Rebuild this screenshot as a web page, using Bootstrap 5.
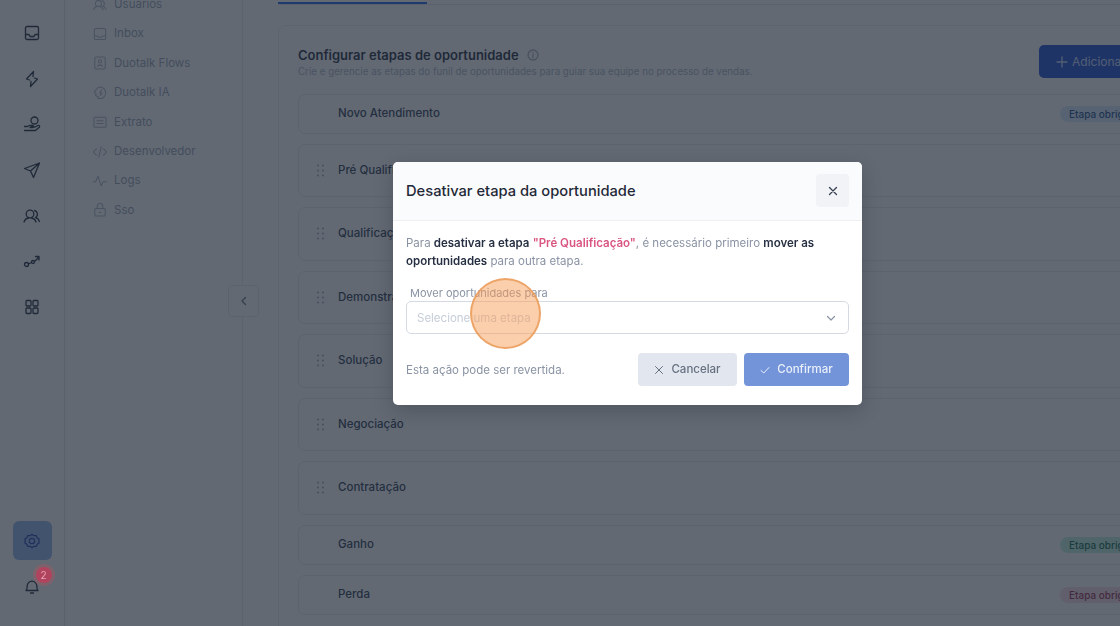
<!DOCTYPE html>
<html lang="pt-BR">
<head>
  <meta charset="UTF-8" />
  <meta name="viewport" content="width=device-width, initial-scale=1.0"/>
  <link href="https://cdn.jsdelivr.net/npm/bootstrap@5.3.3/dist/css/bootstrap.min.css" rel="stylesheet"/>
  <script src="https://cdn.jsdelivr.net/npm/bootstrap@5.3.3/dist/js/bootstrap.bundle.min.js"></script>
  <title>Configurar etapas de oportunidade</title>
  <style>
    html, body { height: 626px; overflow: hidden; }
    body { font-family: Inter, "Liberation Sans", sans-serif; background: #fff; color: #1f2937; }
    svg { fill: none; stroke: currentColor; stroke-width: 1.3; stroke-linecap: round; stroke-linejoin: round; display: block; flex-shrink: 0; }

    .app-shell { height: 626px; }
    .icon-rail { width: 65px; flex-shrink: 0; border-right: 1px solid #dfe3e8; padding: 11px 0 21px; color: #1e293b; }
    .rail-list { gap: 25.7px; margin-top: 12px; }
    .rail-btn { width: 39px; height: 39px; display: flex; align-items: center; justify-content: center; position: relative; border-radius: 6px; }
    .rail-gear { background: #93b5ee; color: #1e40af; margin-bottom: 6px; }
    .rail-dot { position: absolute; z-index: 1; left: 23px; top: 1px; width: 16px; height: 16px; border-radius: 50%; background: #b0445e; color: #e9a3b2; font-size: 10px; line-height: 16px; text-align: center; box-shadow: 0 0 0 3px #7f616c; }

    .side-menu { width: 178px; flex-shrink: 0; border-right: 1px solid #e9ebef; position: relative; padding: 0 0 0 27px; margin-top: -10px; height: 636px; }
    .side-item { display: flex; align-items: center; gap: 6px; height: 29.4px; font-size: 11.5px; color: #9aa2b3; }
    .side-item svg { color: #adb5c4; }
    .collapse-btn { position: absolute; left: 163px; top: 295px; width: 31px; height: 32px; border: 1px solid #e9ebef; border-radius: 4px; background: #fff; display: flex; align-items: center; justify-content: center; color: #6b7280; }

    .main-area { width: 960px; flex-shrink: 0; padding: 0 0 0 35px; }
    .tab-line { height: 5px; padding-top: 2px; border-bottom: 1px solid #e6e8ec; margin-bottom: 20px; }
    .tab-line div { width: 149px; height: 2px; background: #2563eb; }
    .stage-panel { border: 1px solid #eceef2; border-radius: 8px; padding: 19px 19px 12px; height: 640px; }
    .panel-head { height: 48.5px; }
    .panel-title { font-size: 13px; font-weight: 600; line-height: 20px; color: #1f2a3d; margin: 0; }
    .panel-sub { font-size: 9.75px; line-height: 13px; color: #aeb5c2; margin: 0; }
    .info-ico { color: #a9b0bc; margin-left: 8px; }
    .add-btn { background: #1d4ed8; color: #c9d8f8; font-size: 12px; border-radius: 5px; height: 33px; width: 144px; border: 0; padding: 0 0 0 16px; gap: 3px; }
    .add-btn:hover { background: #1d4ed8; color: #c9d8f8; }

    .stage-list { gap: 10px; }
    .stage-row { border: 1px solid #e8eaee; border-radius: 7px; padding: 0 0 0 18px; font-size: 11.5px; font-weight: 500; color: #2f3b52; }
    .row-fixed { height: 40px; padding-left: 39px; }
    .row-drag { height: 53.5px; }
    .row-drag svg { color: #a3a9b5; margin-right: 14px; }
    .stage-tag { margin-left: auto; font-size: 10px; font-weight: 500; height: 16px; line-height: 16px; padding: 0 9px; border-radius: 8px; width: 122px; white-space: nowrap; }
    .tag-blue { background: #dbeafe; color: #1e4e8c; }
    .tag-green { background: #c4f1de; color: #0f6b4f; }
    .tag-red { background: #fbdde5; color: #9b2c55; }

    .page-shade { position: fixed; inset: 0; background: rgba(32, 41, 56, .7); }

    .stage-dialog { position: absolute; left: 393px; top: 162px; width: 469px; height: 243px; background: #fff; border: 0; border-radius: 5px; overflow: hidden; box-shadow: 0 6px 20px rgba(0, 0, 0, .18); }
    .stage-dialog .modal-header { height: 59px; padding: 0 13px; background: #fafbfc; border-bottom: 1px solid #eef0f3; }
    .stage-dialog .modal-title { font-size: 14.7px; font-weight: 500; color: #1f2937; }
    .close-box { width: 33px; height: 33px; background: #f1f3f7; border: 0; border-radius: 4px; padding: 0; display: flex; align-items: center; justify-content: center; color: #374151; margin-top: -1px; }
    .stage-dialog .modal-body { padding: 14px 13px 0; flex: none; }
    .dialog-text { font-size: 11.5px; line-height: 17.5px; color: #8a93a3; margin: 0 0 16px; }
    .dialog-text strong { color: #273043; font-weight: 600; }
    .dialog-text .stage-name { color: #d9567f; }
    .move-label { font-size: 11px; line-height: 14px; color: #8a93a3; margin: 0 0 1px 4px; display: block; }
    .stage-select { height: 33px; font-size: 11.500px; color: #c6ced9; padding: 2px 30px 0 10px; border-color: #d5dae2; border-radius: 5px; background-image: url("data:image/svg+xml,%3csvg xmlns='http://www.w3.org/2000/svg' viewBox='0 0 12 12'%3e%3cpath fill='none' stroke='%238a93a3' stroke-width='1.2' stroke-linecap='round' stroke-linejoin='round' d='M2.500 4.500 6 8l3.500-3.500'/%3e%3c/svg%3e"); background-position: right 11px center; background-size: 12px 12px; }
    .dialog-foot { padding: 19px 13px 0; }
    .foot-note { font-size: 11.5px; color: #8a93a3; padding-top: 3px; }
    .btn-cancel, .btn-confirm { height: 33px; font-size: 11.5px; font-weight: 500; border: 0; border-radius: 4px; padding: 1px 0 0; justify-content: center; gap: 7px; }
    .btn-cancel { width: 99px; background: #e1e6ef; color: #66707f; margin-right: 7px; }
    .btn-cancel svg, .btn-confirm svg { stroke-width: 1; }
    .btn-confirm { width: 105px; background: #7394d8; color: #eaf0fb; }

    .click-mark { position: absolute; left: 470px; top: 278px; width: 71px; height: 71px; border-radius: 50%; background: rgba(247, 158, 90, .5); border: 2px solid rgba(232, 150, 80, .75); }
  </style>
</head>
<body>
  <div class="app-shell d-flex">
    <aside class="icon-rail d-flex flex-column align-items-center">
      <div class="rail-list d-flex flex-column align-items-center">
        <svg width="20" height="20" viewBox="0 0 20 20"><rect x="3.500" y="3.500" width="13" height="13" rx="1.500"/><path d="M3.500 11.500h3.500l1 2h4l1-2h3.500"/></svg>
        <svg width="20" height="20" viewBox="0 0 20 20"><path d="M11.500 2.500 4.500 10l3 1M8.500 17.500l7-7.500-3-1M11.500 2.500 11 7.500M8.500 17.500 9 12.500"/></svg>
        <svg width="20" height="20" viewBox="0 0 20 20"><circle cx="12.500" cy="6.500" r="3.500"/><path d="M2.500 16.500h11l4-3.500c.6-1-.4-2-1.500-1.500l-3 1.500H9.500M2.500 12.500h3l2-1h3c1.200 0 1.200 2 0 2H8"/></svg>
        <svg width="20" height="20" viewBox="0 0 20 20"><path d="M17.500 3 2.500 8.500 8.500 11l3 6.500zM8.500 11l9-8"/></svg>
        <svg width="20" height="20" viewBox="0 0 20 20"><circle cx="8" cy="8" r="3.800"/><path d="M2 16c.8-2.500 3-3.800 4.500-4M9.500 12c1.500.2 3.700 1.500 4.500 4M12.500 4.500a3.800 3.800 0 0 1 1 7c1.500.4 3.200 1.700 4 4"/></svg>
        <svg width="20" height="20" viewBox="0 0 20 20"><circle cx="4.500" cy="13.500" r="2"/><circle cx="11" cy="11" r="1.500"/><path d="M6.500 13 9.500 11.500M12.500 10.500l4-4M13.500 5.500h3.500V9"/></svg>
        <svg width="20" height="20" viewBox="0 0 20 20"><rect x="4" y="3.500" width="5" height="5.500" rx="1"/><rect x="11" y="3.500" width="5" height="5.500" rx="1"/><rect x="4" y="11" width="5" height="5.500" rx="1"/><rect x="11" y="11" width="5" height="5.500" rx="1"/></svg>
      </div>
      <div class="mt-auto d-flex flex-column align-items-center">
        <div class="rail-btn rail-gear">
          <svg width="18" height="18" viewBox="0 0 20 20"><circle cx="10" cy="10" r="3"/><path d="M10 2.500l2 1.600 2.700-.2 1 2.400 2.300 1.500-.6 2.200.6 2.200-2.300 1.500-1 2.400-2.700-.2-2 1.600-2-1.600-2.700.2-1-2.400-2.300-1.500.6-2.200-.6-2.200 2.300-1.500 1-2.400 2.700.2z"/></svg>
        </div>
        <div class="rail-btn">
          <svg width="20" height="20" viewBox="0 0 20 20"><path d="M4 14.500c1-1 1.200-2 1.200-4.500a4.800 4.800 0 0 1 9.600 0c0 2.500.2 3.500 1.200 4.500zM8.500 17h3"/></svg>
          <span class="rail-dot">2</span>
        </div>
      </div>
    </aside>

    <nav class="side-menu">
      <div class="side-item"><svg width="16" height="16" viewBox="0 0 20 20"><circle cx="8" cy="8" r="3.800"/><path d="M2 16c.8-2.500 3-3.800 4.500-4M9.500 12c1.500.2 3.700 1.500 4.500 4M12.500 4.500a3.800 3.800 0 0 1 1 7c1.500.4 3.200 1.700 4 4"/></svg>Usuários</div>
      <div class="side-item"><svg width="16" height="16" viewBox="0 0 20 20"><rect x="3" y="3" width="14" height="14" rx="1.500"/><path d="M3 12.500h4l1 1.500h4l1-1.500h4"/></svg>Inbox</div>
      <div class="side-item"><svg width="16" height="16" viewBox="0 0 20 20"><rect x="3.500" y="2.500" width="13" height="15" rx="1.500"/><circle cx="10" cy="8" r="2"/><path d="M7 14c.5-1.800 5.500-1.800 6 0"/></svg>Duotalk Flows</div>
      <div class="side-item"><svg width="16" height="16" viewBox="0 0 20 20"><path d="M10 2.500a7 7 0 0 1 7 7 7 7 0 0 1-7 7.500H7.500v-2.500l-3-1 .5-3-2-1L5 6a6 6 0 0 1 5-3.500z"/><path d="M12.500 6 9.500 10h3l-2 3"/></svg>Duotalk IA</div>
      <div class="side-item"><svg width="16" height="16" viewBox="0 0 20 20"><rect x="2.500" y="4" width="15" height="12.500" rx="1"/><path d="M6 8.500h8M6 12h8"/></svg>Extrato</div>
      <div class="side-item"><svg width="16" height="16" viewBox="0 0 20 20"><path d="M5.500 6 1.500 10l4 4M14.500 6l4 4-4 4M11.500 3.500l-3 13"/></svg>Desenvolvedor</div>
      <div class="side-item"><svg width="16" height="16" viewBox="0 0 20 20"><path d="M1.500 11h3l3-7 4 12 2.500-5h4.500"/></svg>Logs</div>
      <div class="side-item"><svg width="16" height="16" viewBox="0 0 20 20"><rect x="3.500" y="8" width="13" height="9.500" rx="1"/><path d="M6.500 8V5.500a3.500 3.500 0 0 1 7 0V8M9 13h2"/></svg>Sso</div>
      <div class="collapse-btn"><svg width="12" height="12" viewBox="0 0 12 12"><path d="M7.500 2.500 4 6l3.500 3.500"/></svg></div>
    </nav>

    <main class="main-area">
      <div class="tab-line"><div></div></div>
      <section class="stage-panel">
        <div class="panel-head d-flex justify-content-between align-items-start">
          <div>
            <div class="d-flex align-items-center">
              <h2 class="panel-title">Configurar etapas de oportunidade</h2>
              <svg class="info-ico" width="12" height="12" viewBox="0 0 12 12"><circle cx="6" cy="6" r="5"/><path d="M6 5.500v3M6 3.500v.2"/></svg>
            </div>
            <p class="panel-sub">Crie e gerencie as etapas do funil de oportunidades para guiar sua equipe no processo de vendas.</p>
          </div>
          <button class="btn add-btn d-flex align-items-center"><svg width="14" height="14" viewBox="0 0 14 14"><path d="M7 2v10M2 7h10"/></svg>Adicionar etapa</button>
        </div>
        <div class="stage-list d-flex flex-column">
          <div class="stage-row row-fixed d-flex align-items-center">Novo Atendimento<span class="stage-tag tag-blue">Etapa obrigatória</span></div>
          <div class="stage-row row-drag d-flex align-items-center"><svg width="7" height="13" viewBox="0 0 7 13"><path d="M1 1.500v.01M6 1.500v.01M1 6.500v.01M6 6.500v.01M1 11.500v.01M6 11.500v.01" stroke-width="2"/></svg>Pré Qualificação</div>
          <div class="stage-row row-drag d-flex align-items-center"><svg width="7" height="13" viewBox="0 0 7 13"><path d="M1 1.500v.01M6 1.500v.01M1 6.500v.01M6 6.500v.01M1 11.500v.01M6 11.500v.01" stroke-width="2"/></svg>Qualificação</div>
          <div class="stage-row row-drag d-flex align-items-center"><svg width="7" height="13" viewBox="0 0 7 13"><path d="M1 1.500v.01M6 1.500v.01M1 6.500v.01M6 6.500v.01M1 11.500v.01M6 11.500v.01" stroke-width="2"/></svg>Demonstração</div>
          <div class="stage-row row-drag d-flex align-items-center"><svg width="7" height="13" viewBox="0 0 7 13"><path d="M1 1.500v.01M6 1.500v.01M1 6.500v.01M6 6.500v.01M1 11.500v.01M6 11.500v.01" stroke-width="2"/></svg>Solução</div>
          <div class="stage-row row-drag d-flex align-items-center"><svg width="7" height="13" viewBox="0 0 7 13"><path d="M1 1.500v.01M6 1.500v.01M1 6.500v.01M6 6.500v.01M1 11.500v.01M6 11.500v.01" stroke-width="2"/></svg>Negociação</div>
          <div class="stage-row row-drag d-flex align-items-center"><svg width="7" height="13" viewBox="0 0 7 13"><path d="M1 1.500v.01M6 1.500v.01M1 6.500v.01M6 6.500v.01M1 11.500v.01M6 11.500v.01" stroke-width="2"/></svg>Contratação</div>
          <div class="stage-row row-fixed d-flex align-items-center">Ganho<span class="stage-tag tag-green">Etapa obrigatória</span></div>
          <div class="stage-row row-fixed d-flex align-items-center">Perda<span class="stage-tag tag-red">Etapa obrigatória</span></div>
        </div>
      </section>
    </main>
  </div>

  <div class="page-shade"></div>

  <div class="modal-content stage-dialog">
    <div class="modal-header d-flex justify-content-between align-items-center">
      <h5 class="modal-title">Desativar etapa da oportunidade</h5>
      <button class="close-box" type="button"><svg width="12" height="12" viewBox="0 0 12 12"><path d="M2.500 2.500l7 7M9.500 2.500l-7 7"/></svg></button>
    </div>
    <div class="modal-body">
      <p class="dialog-text">Para <strong>desativar a etapa</strong> <strong class="stage-name">"Pré Qualificação"</strong>, é necessário primeiro <strong>mover as oportunidades</strong> para outra etapa.</p>
      <label class="move-label" for="etapaDestino">Mover oportunidades para</label>
      <select class="form-select stage-select" id="etapaDestino"><option>Selecione uma etapa</option></select>
    </div>
    <div class="dialog-foot d-flex align-items-center">
      <span class="foot-note me-auto">Esta ação pode ser revertida.</span>
      <button class="btn btn-cancel d-flex align-items-center"><svg width="10" height="10" viewBox="0 0 10 10"><path d="M1.500 1.500l7 7M8.500 1.500l-7 7"/></svg>Cancelar</button>
      <button class="btn btn-confirm d-flex align-items-center"><svg width="10" height="10" viewBox="0 0 10 10"><path d="M1 5.500 3.800 8 9 2.500"/></svg>Confirmar</button>
    </div>
  </div>

  <div class="click-mark"></div>
</body>
</html>
